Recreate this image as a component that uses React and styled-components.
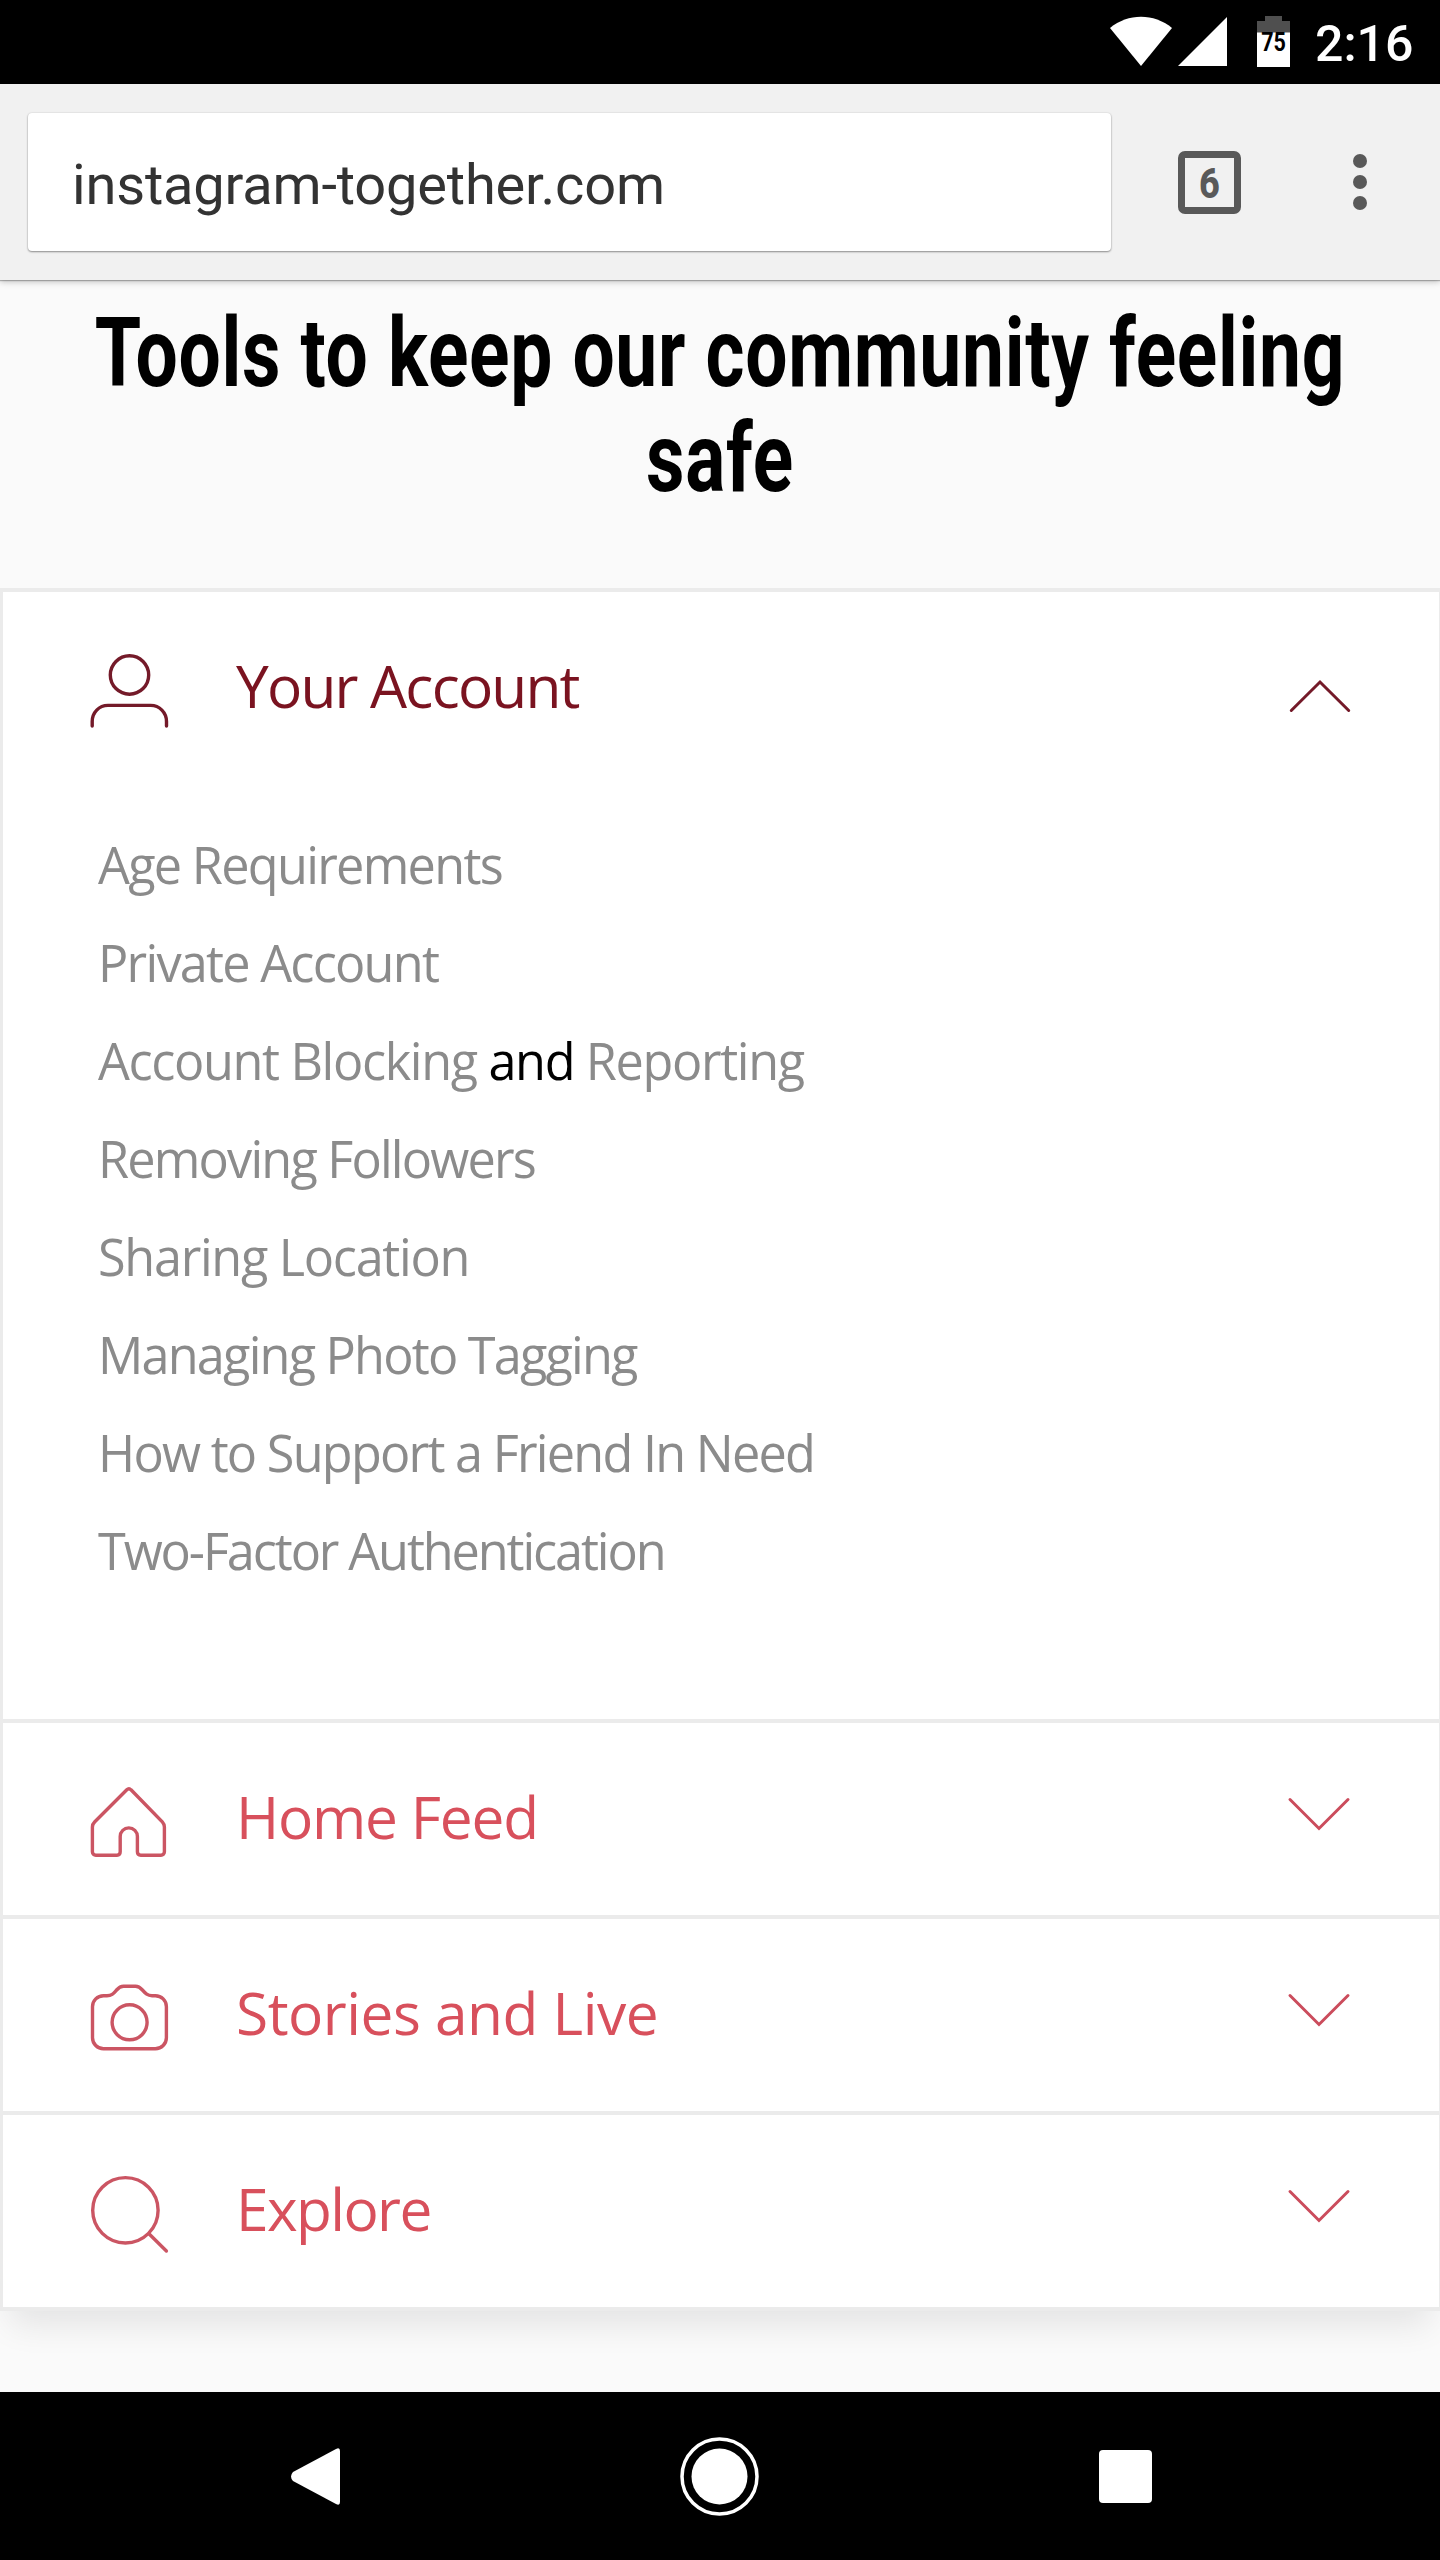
import React, { useState } from 'react';
import styled, { createGlobalStyle } from 'styled-components';

const GlobalStyle = createGlobalStyle`
* {
    box-sizing: border-box;
}

body {
    margin: 0;
    background-color: #fafafa;
    font-family: "Open Sans", sans-serif;
}

svg {
    display: block;
    flex-shrink: 0;
}
`;

const Screen = styled.div`
width: 1440px;
height: 2560px;
display: flex;
flex-direction: column;
overflow: hidden;
`;

const StatusBar = styled.div`
height: 84px;
flex-shrink: 0;
display: flex;
padding: 16px 28px 0 1110px;
background-color: black;
`;

const SignalIcons = styled.svg`
width: 117px;
height: 51px;
margin-right: 30px;
`;

const Battery = styled.div`
width: 33px;
height: 51px;
position: relative;
`;

const BatteryLevel = styled.span`
position: absolute;
left: -4px;
right: -4px;
top: 13px;
text-align: center;
font: 700 25px/28px Roboto, sans-serif;
transform: scaleX(0.86);
color: black;
`;

const Clock = styled.span`
margin: -1px 0 0 25px;
font: 500 50px/58px Roboto, sans-serif;
color: white;
`;

const Toolbar = styled.div`
height: 196px;
flex-shrink: 0;
display: flex;
align-items: flex-start;
padding: 29px 0 0 28px;
background-color: #f1f1f1;
box-shadow: 0 1px 1px rgba(0, 0, 0, 0.25), 0 2px 6px rgba(0, 0, 0, 0.22);
position: relative;
`;

const AddressBox = styled.div`
width: 1083px;
height: 138px;
padding-left: 44px;
border-radius: 4px;
background-color: white;
box-shadow: 0 1px 2px rgba(0, 0, 0, 0.4), 0 0 2px rgba(0, 0, 0, 0.12);
font: 400 56px/144px Roboto, sans-serif;
letter-spacing: -0.19px;
color: #333;
`;

const TabCount = styled.div`
width: 63px;
height: 63px;
margin: 38px 0 0 67px;
display: flex;
justify-content: center;
align-items: center;
border: 7px solid #595959;
border-radius: 7px;
color: #595959;

span {
    font: 800 43px/50px Roboto, sans-serif;
    transform: scaleX(0.84);
}
`;

const MenuDots = styled.div`
margin: 41px 0 0 112px;
display: flex;
flex-direction: column;
gap: 7px;

i {
    width: 14px;
    height: 14px;
    border-radius: 50%;
    background-color: #595959;
}
`;

const Content = styled.main`
height: 2112px;
flex-shrink: 0;
background-color: #fafafa;
overflow: hidden;
`;

const Title = styled.h1`
width: 1440px;
height: 308px;
margin: 0;
padding-top: 21px;
text-align: center;
white-space: nowrap;
font: 700 96px/105px Roboto, sans-serif;
letter-spacing: 0.92px;
color: black;

span {
    display: block;
    transform: scaleX(0.78);
    margin: 0 -200px;
}
`;

const Accordion = styled.div`
border: solid #ebebeb;
border-width: 0 1px 4px 3px;
background-color: white;
box-shadow: 0 24px 32px -10px rgba(0, 0, 0, 0.09);
`;

const Section = styled.section`
height: ${props => props.$open ? "1131px" : "196px"};
border-top: 4px solid #ebebeb;
color: ${props => props.$open ? "#7a1320" : "#d8505c"};
`;

const SectionHeader = styled.div`
height: 192px;
display: flex;
align-items: flex-start;
padding-left: 85px;
cursor: pointer;
`;

const SectionIcon = styled.svg`
width: 84px;
height: 84px;
margin-top: 56px;
fill: none;
stroke: ${props => props.$open ? "#741a29" : "#cb5563"};
stroke-width: 3.4px;
stroke-linecap: round;
stroke-linejoin: round;
`;

const SectionName = styled.h2`
width: 1050px;
margin: 53px 0 0 64px;
font-size: 58.6px;
font-weight: 400;
line-height: 80px;
letter-spacing: ${props => props.$spacing}px;
white-space: nowrap;
`;

const Chevron = styled.svg`
width: 66px;
height: 40px;
margin-top: ${props => props.$open ? "84px" : "71px"};
fill: none;
stroke: ${props => props.$open ? "#741a29" : "#cb4c5c"};
stroke-width: 3px;
stroke-linecap: round;
`;

const LinkList = styled.ul`
margin: 0;
padding: 32px 0 0 95px;
list-style: none;
`;

const LinkItem = styled.li`
height: 98px;
font-size: 50.4px;
line-height: 98px;
letter-spacing: ${props => props.$spacing}px;
white-space: pre;
color: black;
`;

const Link = styled.span`
color: #8b8b8b;
`;

const NavBar = styled.div`
height: 168px;
flex-shrink: 0;
display: flex;
align-items: center;
gap: 340px;
padding-left: 291px;
background-color: black;
`;

const icons = {
    user: <>
        <circle cx="41.5" cy="27" r="19.2" />
        <path d="M4.2 78V73.5C4.2 64.5 11 57.4 20 57.4H62.7C71.5 57.4 78.5 64.5 78.5 73.5V78" />
    </>,
    home: <path d="M38.8 10.8L6.8 42.8C5.2 44.4 4.4 46 4.4 48V72.8A3.4 3.4 0 0 0 7.8 76.2H29C31 76.2 32.2 74.8 32.2 72.8V57.5A8.6 8.6 0 0 1 49.4 57.5V72.8C49.4 74.8 50.8 76.2 52.8 76.2H73A3.4 3.4 0 0 0 76.4 72.8V48C76.4 46 75.8 44.4 74.3 42.8L43 10.8C41.7 9.4 40.2 9.4 38.8 10.8Z" />,
    camera: <>
        <path d="M15.5 20.7H19C24 20.7 25.5 18.5 28.6 15C31 12.3 32.5 11.3 35.5 11.3H47.5C50.5 11.3 52 12.3 54.4 15C57.5 18.5 59.5 20.7 64 20.7H67.4A11 11 0 0 1 78.4 31.7V62.7A11 11 0 0 1 67.4 73.7H15.5A11 11 0 0 1 4.5 62.7V31.7A11 11 0 0 1 15.5 20.7Z" />
        <circle cx="41.6" cy="47.3" r="17.5" />
    </>,
    search: <>
        <circle cx="37.4" cy="39.3" r="32.7" />
        <path d="M61.2 63L78.4 80" />
    </>
};

const sections = [
    { name: "Your Account", icon: "user", spacing: -1.8 },
    { name: "Home Feed", icon: "home", spacing: -1.2 },
    { name: "Stories and Live", icon: "camera", spacing: -0.5 },
    { name: "Explore", icon: "search", spacing: -1.6 }
];

const accountLinks = [
    { parts: ["Age Requirements"], spacing: -1.7 },
    { parts: ["Private Account"], spacing: -1.75 },
    { parts: ["Account Blocking", "Reporting"], spacing: -1.36 },
    { parts: ["Removing Followers"], spacing: -1.82 },
    { parts: ["Sharing Location"], spacing: -1.3 },
    { parts: ["Managing Photo Tagging"], spacing: -1.79 },
    { parts: ["How to Support a Friend In Need"], spacing: -1.74 },
    { parts: ["Two-Factor Authentication"], spacing: -2.1 }
];

const AccordionSection = ({ name, icon, spacing, open, onToggle, children }) => {
    return <Section $open={open}>
        <SectionHeader onClick={onToggle}>
            <SectionIcon $open={open} viewBox="0 0 84 84">{icons[icon]}</SectionIcon>
            <SectionName $spacing={spacing}>{name}</SectionName>
            <Chevron $open={open} viewBox="0 0 66 40">
                <path d={open ? "M5.3 34.5L34 6L62.7 34.5" : "M4 5.5L33 34.5L62 5.5"} />
            </Chevron>
        </SectionHeader>
        {open && children}
    </Section>
};

const App = () => {
    const [opened, setOpened] = useState("Your Account");
    return <Screen>
        <GlobalStyle />
        <StatusBar>
            <SignalIcons viewBox="0 0 117 51" fill="white">
                <path d="M31 50L0 12C18-3 44-3 62 12Z" />
                <path d="M68 50H117V1Z" />
            </SignalIcons>
            <Battery>
                <svg width="33" height="51" viewBox="0 0 33 51">
                    <path d="M8 0H25V5H33V17H0V5H8Z" fill="#4f4f4f" />
                    <path d="M0 16.5H33V51H0Z" fill="white" />
                </svg>
                <BatteryLevel>75</BatteryLevel>
            </Battery>
            <Clock>2:16</Clock>
        </StatusBar>
        <Toolbar>
            <AddressBox>instagram-together.com</AddressBox>
            <TabCount><span>6</span></TabCount>
            <MenuDots><i /><i /><i /></MenuDots>
        </Toolbar>
        <Content>
            <Title>
                <span>Tools to keep our community feeling</span>
                <span>safe</span>
            </Title>
            <Accordion>
                {sections.map(section => <AccordionSection
                    key={section.name}
                    {...section}
                    open={opened === section.name}
                    onToggle={() => setOpened(section.name)}
                >
                    <LinkList>
                        {accountLinks.map(({ parts, spacing }) => <LinkItem key={parts[0]} $spacing={spacing}>
                            <Link>{parts[0]}</Link>
                            {parts[1] && <> and <Link>{parts[1]}</Link></>}
                        </LinkItem>)}
                    </LinkList>
                </AccordionSection>)}
            </Accordion>
        </Content>
        <NavBar>
            <svg width="49" height="57" viewBox="0 0 49 57" fill="white">
                <path d="M2 24L45 1Q49-1 49 3V54Q49 58 45 56L2 33Q-2 28.5 2 24Z" />
            </svg>
            <svg width="79" height="79" viewBox="0 0 79 79">
                <circle cx="39.5" cy="39.5" r="37.5" fill="none" stroke="white" strokeWidth="3.5" />
                <circle cx="39.5" cy="39.5" r="28" fill="white" />
            </svg>
            <svg width="53" height="53" viewBox="0 0 53 53">
                <rect width="53" height="53" rx="4" fill="white" />
            </svg>
        </NavBar>
    </Screen>
};

export default App;
